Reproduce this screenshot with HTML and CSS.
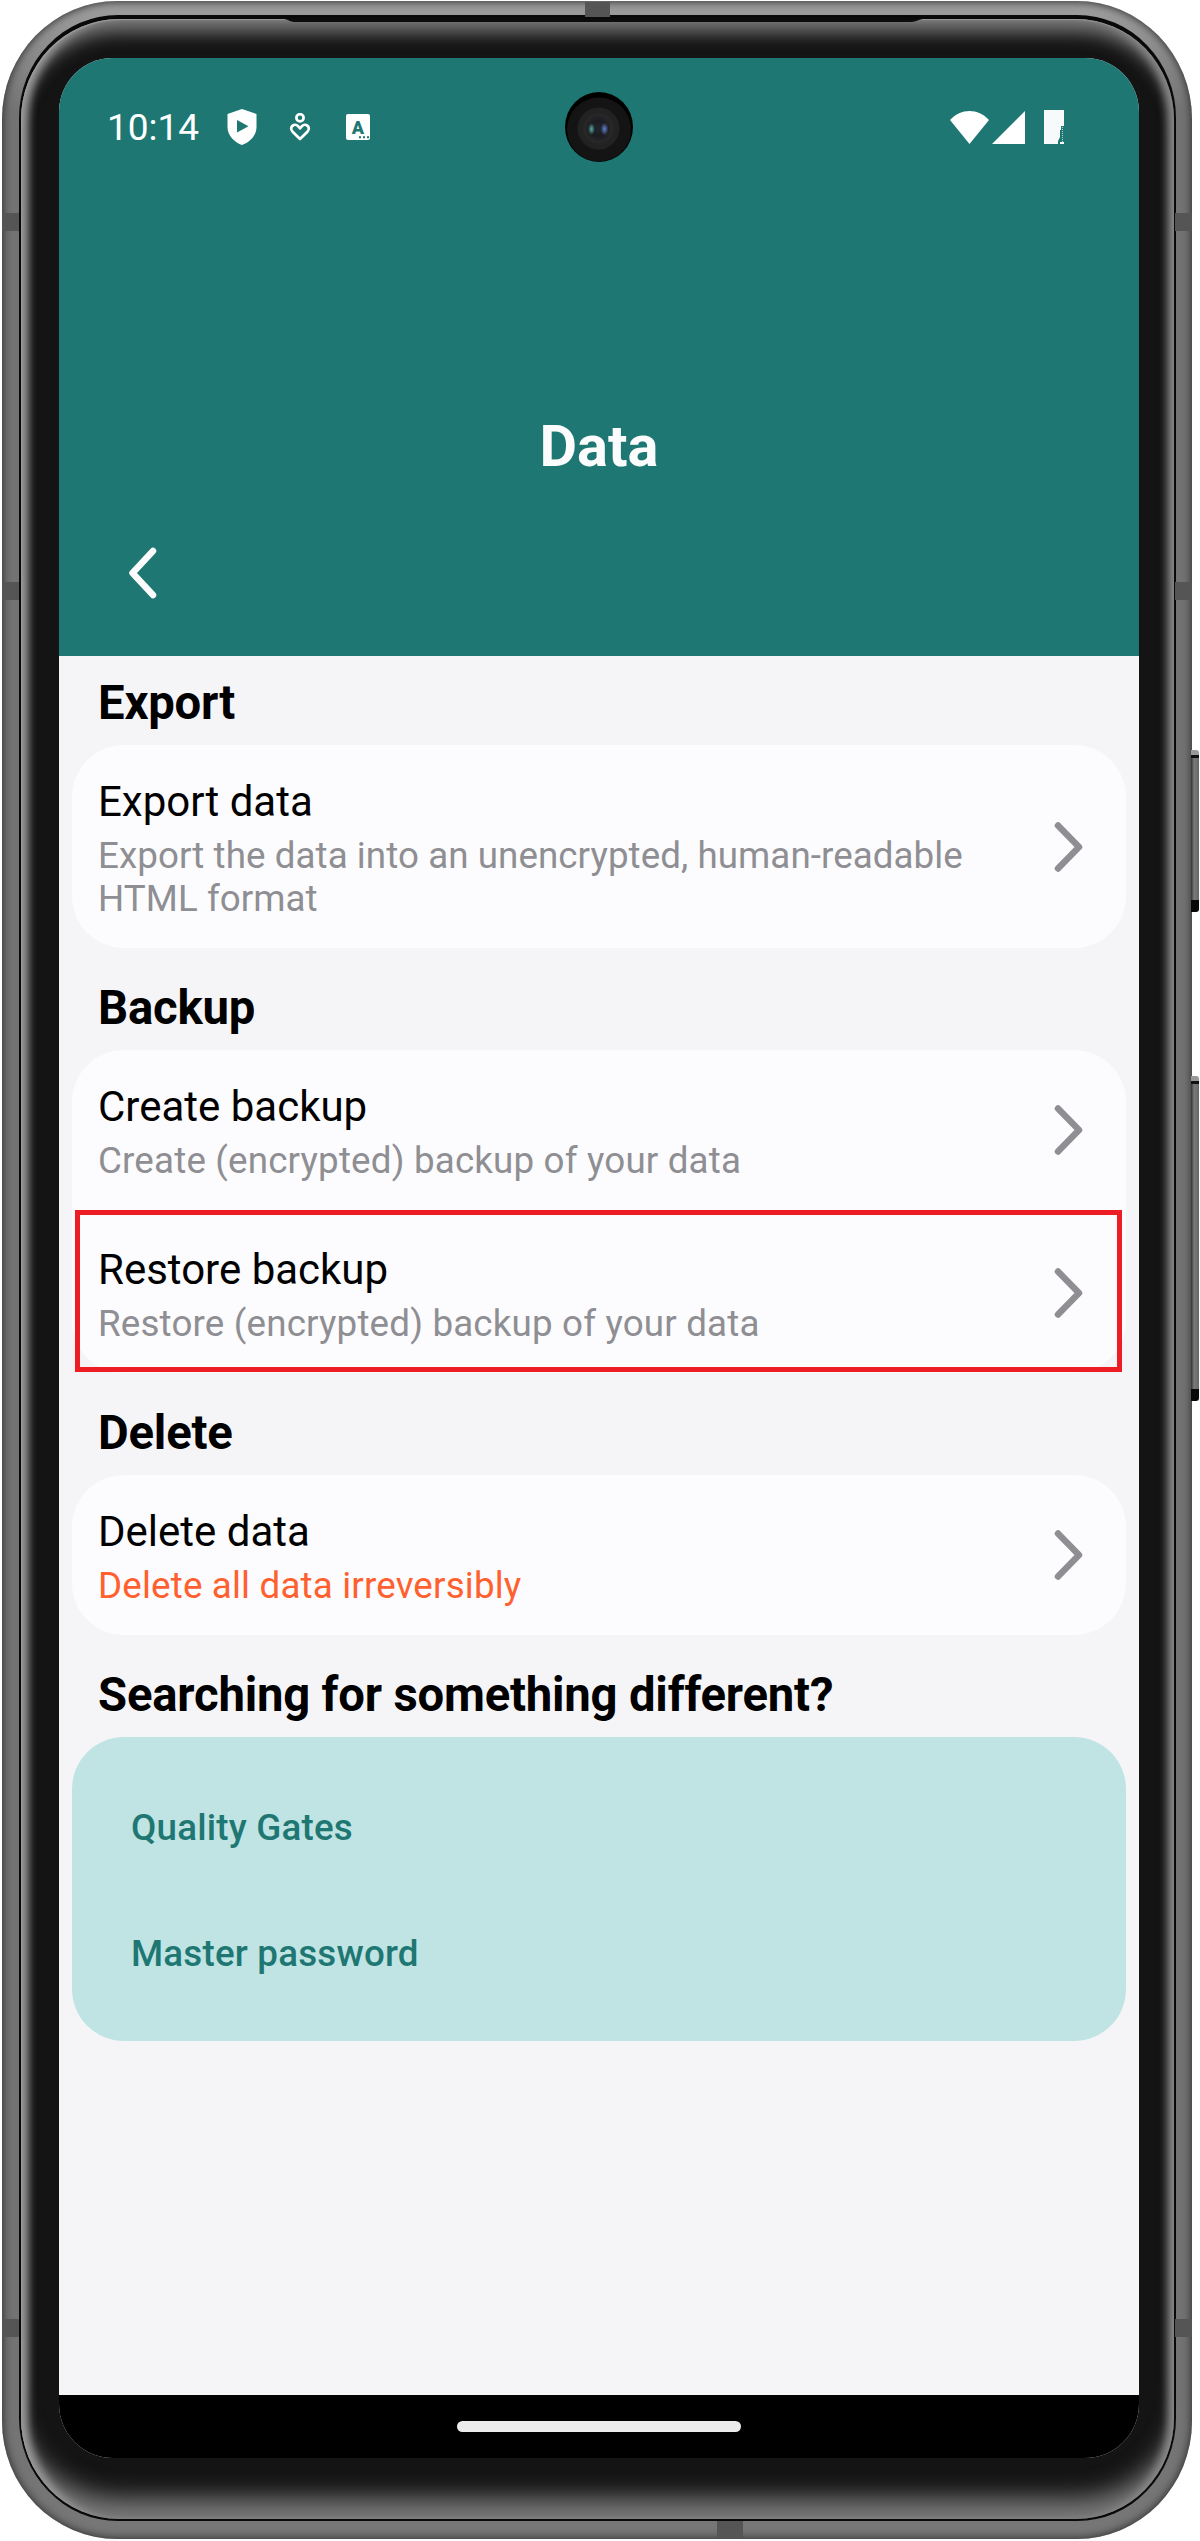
FILE: index.html
```html
<!DOCTYPE html>
<html lang="en">
<head>
<meta charset="utf-8">
<title>Data</title>
<link rel="stylesheet" href="styles.css">
</head>
<body>
<div class="phone">
  <span class="button button-power"></span>
  <span class="button button-volume"></span>
  <span class="seam seam-left seam-a"></span>
  <span class="seam seam-right seam-a"></span>
  <span class="seam seam-left seam-b"></span>
  <span class="seam seam-right seam-b"></span>
  <span class="seam seam-left seam-c"></span>
  <span class="seam seam-right seam-c"></span>
  <div class="rim">
    <div class="bezel">
      <svg class="speaker" width="660" height="5" viewBox="0 0 660 5"><path d="M0 0H660Q650 0 643 3Q641 4 635 4H24Q18 4 15 2Q10 0 0 0Z" fill="#0c0c0c"/></svg>
      <main class="screen">
        <header class="header">
          <div class="status">
            <span class="time">10:14</span>
            <svg class="shield" width="30" height="36" viewBox="0 0 30 36"><path d="M15 0L29.500 5V18C29.500 27 22 33.500 15 36C8 33.500 .5 27 .5 18V5Z" fill="#fff"/><path d="M10 11L21.500 17.200L10 23.500Z" fill="#1e7772"/></svg>
            <svg class="heart" width="22" height="28" viewBox="0 0 22 28" fill="none" stroke="#fff" stroke-width="2.700"><circle cx="11" cy="4.800" r="3.600"/><path d="M11 26L3.600 18.700C-.6 14.200 5.600 9.500 9 13.200L11 15.400L13 13.200C16.400 9.500 22.600 14.200 18.400 18.700Z" stroke-linejoin="round"/></svg>
            <svg class="letter" width="24" height="26" viewBox="0 0 24 26"><rect width="24" height="26" rx="2" fill="#fff"/><text x="12" y="19.500" text-anchor="middle" font-family="Roboto, sans-serif" font-size="18" font-weight="900" fill="#1e7772">A</text><path d="M13 23.300h2M17 23.300h2M21 23.300h2" stroke="#1e7772" stroke-width="2"/></svg>
            <svg class="wifi" width="39" height="33" viewBox="0 0 39 33"><path d="M19.500 33L0 9C11-3 28-3 39 9Z" fill="#fff"/></svg>
            <svg class="signal" width="33" height="33" viewBox="0 0 33 33"><path d="M33 0V33H0Z" fill="#fff"/></svg>
            <svg class="battery" width="20" height="34" viewBox="0 0 20 34"><path d="M0 0H20V16H17V20H16V27L14 31V34H0Z" fill="#f6fafa"/><path d="M16 32H20V34H16Z" fill="#fff"/><path d="M18.500 17V32" stroke="#b7d4d2" stroke-width="1" stroke-dasharray="1 1"/></svg>
          </div>
          <h1 class="title">Data</h1>
          <svg class="back" width="30" height="52" viewBox="0 0 30 52"><path d="M25 4L4.500 26L25 48" fill="none" stroke="#fcfcfc" stroke-width="6.500" stroke-linecap="round" stroke-linejoin="round"/></svg>
        </header>
        <div class="content">
          <h2 class="heading">Export</h2>
          <section class="card">
            <div class="row">
              <div class="text"><p class="name">Export data</p><p class="note note-long">Export the data into an unencrypted, human-readable HTML format</p></div>
              <svg class="chevron" width="30" height="52" viewBox="0 0 30 52"><path d="M4 4.500L25 26L4 47.500"/></svg>
            </div>
          </section>
          <h2 class="heading">Backup</h2>
          <section class="card">
            <div class="row">
              <div class="text"><p class="name">Create backup</p><p class="note">Create (encrypted) backup of your data</p></div>
              <svg class="chevron" width="30" height="52" viewBox="0 0 30 52"><path d="M4 4.500L25 26L4 47.500"/></svg>
            </div>
            <div class="row highlighted">
              <div class="text"><p class="name">Restore backup</p><p class="note">Restore (encrypted) backup of your data</p></div>
              <svg class="chevron" width="30" height="52" viewBox="0 0 30 52"><path d="M4 4.500L25 26L4 47.500"/></svg>
            </div>
          </section>
          <h2 class="heading">Delete</h2>
          <section class="card">
            <div class="row">
              <div class="text"><p class="name">Delete data</p><p class="note warning">Delete all data irreversibly</p></div>
              <svg class="chevron" width="30" height="52" viewBox="0 0 30 52"><path d="M4 4.500L25 26L4 47.500"/></svg>
            </div>
          </section>
          <h2 class="heading">Searching for something different?</h2>
          <nav class="card links"><a class="link">Quality Gates</a><a class="link">Master password</a></nav>
        </div>
        <footer class="navbar"><span class="pill"></span></footer>
        <svg class="camera" width="68" height="70" viewBox="0 0 68 70">
          <defs>
            <radialGradient id="lens"><stop offset="0" stop-color="#20262e"/><stop offset=".5" stop-color="#1b1c20"/><stop offset="1" stop-color="#292929"/></radialGradient>
            <radialGradient id="glintA"><stop offset="0" stop-color="#58aaa5"/><stop offset="1" stop-color="#58aaa5" stop-opacity="0"/></radialGradient>
            <radialGradient id="glintB"><stop offset="0" stop-color="#5f7fd0"/><stop offset="1" stop-color="#5f7fd0" stop-opacity="0"/></radialGradient>
          </defs>
          <ellipse cx="34" cy="35" rx="34" ry="35" fill="#000"/>
          <ellipse cx="34" cy="37.500" rx="32" ry="32" fill="#141414"/>
          <circle cx="33.500" cy="36.500" r="21" fill="#222"/>
          <circle cx="33.500" cy="36.500" r="15" fill="url(#lens)"/>
          <ellipse cx="26.500" cy="37" rx="3.500" ry="6" fill="url(#glintA)"/>
          <ellipse cx="39.500" cy="37" rx="4" ry="6.500" fill="url(#glintB)"/>
        </svg>
      </main>
    </div>
  </div>
  <span class="seam seam-top"></span>
  <span class="seam seam-bottom"></span>
</div>
</body>
</html>
```
FILE: styles.css
```css
* { box-sizing: border-box; }
body { margin: 0; background: #fff; font-family: Roboto, "Liberation Sans", sans-serif; color: #000; }
h1, h2, p { margin: 0; }
svg { display: block; flex: none; }

/* Device frame */
.phone {
  position: relative;
  width: 1190px;
  height: 2538px;
  margin: 1px 0 0 2px;
  padding: 14px 16px 18px 17px;
  border-radius: 115px / 118px;
  background: linear-gradient(#a0a0a0, #737373 110px, #737373 2400px, #777);
  box-shadow: inset 0 0 8px 1px #303030;
}
.rim { height: 2506px; padding: 4px 2px 2px; border-radius: 99px / 103px; background: #090909; }
.bezel {
  position: relative;
  height: 2500px;
  padding: 39px 34px 61px 38px;
  border-radius: 98px / 101px;
  background: #141414;
  box-shadow: inset 1px 1px 1px #999, inset 11px 0 9px -4px #9a9a9a, inset -10px 0 9px -4px #8a8a8a, inset 0 21px 18px -8px #7a7a7a, inset 0 -31px 24px -10px #7a7a7a;
}
.speaker { position: absolute; left: 252px; top: -1px; }
.button {
  position: absolute;
  left: 1189px;
  width: 8px;
  border-radius: 0 3px 3px 0;
  background: linear-gradient(#999 0 5px, #111 5px 8px, transparent 8px calc(100% - 12px), #080808 calc(100% - 12px)), linear-gradient(90deg, #333, #7b7b7b 40%, #666);
}
.button-power { top: 749px; height: 162px; }
.button-volume { top: 1075px; height: 325px; }
.seam { position: absolute; background: #555; }
.seam-left { left: 0; width: 17px; height: 18px; }
.seam-right { right: 0; width: 17px; height: 18px; }
.seam-a { top: 212px; }
.seam-b { top: 581px; }
.seam-c { top: 2318px; }
.seam-top { left: 583px; top: 1px; width: 25px; height: 15px; }
.seam-bottom { left: 715px; bottom: 1px; width: 26px; height: 17px; }

/* Screen */
.screen {
  position: relative;
  display: flex;
  flex-direction: column;
  width: 1080px;
  height: 2400px;
  border-radius: 54px;
  overflow: hidden;
  background: #f5f5f8;
}
.camera { position: absolute; left: 506px; top: 34px; }
.header { height: 598px; background: #1e7772; color: #fcfcfc; }
.status { display: flex; align-items: center; height: 138px; padding: 0 75px 0 48px; }
.time { width: 92px; padding-top: 2px; font-size: 37px; line-height: 44px; color: #fff; }
.shield { margin-left: 28px; }
.heart { margin-left: 32px; }
.letter { margin-left: 35px; }
.wifi { margin-left: auto; }
.signal { margin-left: 3px; }
.battery { margin-left: 19px; }
.title { margin-top: 216px; text-align: center; font-size: 57.750px; line-height: 68px; font-weight: 700; }
.back { margin: 67px 0 0 69px; }

/* Settings list */
.content { flex: 1; padding: 0 13px; }
.heading { padding: 32px 26px 14px; font-size: 47.250px; line-height: 56px; font-weight: 700; letter-spacing: -0.2px; }
.heading:first-child { padding-top: 19px; }
.card { display: flex; flex-direction: column; gap: 3px; border-radius: 52px; background: #fcfcfe; }
.row { position: relative; display: flex; align-items: center; padding: 32px 42px 28px 26px; }
.text { flex: 1; padding-right: 54px; }
.name { font-size: 42px; line-height: 50px; }
.note { margin-top: 7px; font-size: 36.750px; line-height: 43px; letter-spacing: 0.17px; color: #8e8e93; }
.note-long { letter-spacing: 0.06px; }
.warning { color: #ff6030; }
.chevron { margin-bottom: 4px; fill: none; stroke: #8e8e93; stroke-width: 6.500; stroke-linecap: round; stroke-linejoin: round; }
.highlighted::after { content: ""; position: absolute; left: 3px; right: 4px; top: -3px; bottom: 1px; border: 5px solid #ee1c25; }
.links { gap: 83px; height: 304px; padding: 69px 59px 0; background: #c0e4e3; }
.link { font-size: 36.750px; line-height: 43px; font-weight: 500; letter-spacing: 0.2px; color: #1e7772; }

/* Gesture bar */
.navbar { display: flex; justify-content: center; height: 63px; padding-top: 26px; background: #000; }
.pill { width: 284px; height: 11px; border-radius: 6px; background: #ececec; }
```
